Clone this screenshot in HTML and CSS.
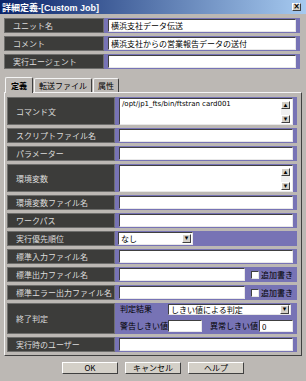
FILE: index.html
```html
<!DOCTYPE html>
<html lang="ja">
<head>
  <meta charset="UTF-8">
  <title>詳細定義-[Custom Job]</title>
  <link rel="stylesheet" href="styles.css">
</head>
<body>

  <div class="titlebar">
    <span class="title">詳細定義-[Custom Job]</span>
    <span class="close">×</span>
  </div>

  <div class="head">
    <div class="row"><div class="lbl">ユニット名</div><div class="val"><input class="fld" value="横浜支社データ伝送"></div></div>
    <div class="row"><div class="lbl">コメント</div><div class="val"><input class="fld" value="横浜支社からの営業報告データの送付"></div></div>
    <div class="row"><div class="lbl">実行エージェント</div><div class="val"><input class="fld" value=""></div></div>
  </div>

  <div class="tabs">
    <span class="tab active">定義</span>
    <span class="tab">転送ファイル</span>
    <span class="tab">属性</span>
  </div>

  <div class="panel">
    <div class="row tall">
      <div class="lbl">コマンド文</div>
      <div class="val">
        <div class="area">
          <span class="area-text">/opt/jp1_fts/bin/ftstran card001</span>
          <span class="sb"><span class="sb-btn">▴</span><span class="sb-btn">▾</span></span>
        </div>
      </div>
    </div>
    <div class="row"><div class="lbl">スクリプトファイル名</div><div class="val"><input class="fld" value=""></div></div>
    <div class="row"><div class="lbl">パラメーター</div><div class="val"><input class="fld" value=""></div></div>
    <div class="row tall">
      <div class="lbl">環境変数</div>
      <div class="val">
        <div class="area">
          <span class="area-text"></span>
          <span class="sb"><span class="sb-btn">▴</span><span class="sb-btn">▾</span></span>
        </div>
      </div>
    </div>
    <div class="row"><div class="lbl">環境変数ファイル名</div><div class="val"><input class="fld" value=""></div></div>
    <div class="row"><div class="lbl">ワークパス</div><div class="val"><input class="fld" value=""></div></div>
    <div class="row">
      <div class="lbl">実行優先順位</div>
      <div class="val pri">
        <div class="select short"><span class="select-text">なし</span><span class="drop">▾</span></div>
      </div>
    </div>
    <div class="row"><div class="lbl">標準入力ファイル名</div><div class="val"><input class="fld" value=""></div></div>
    <div class="row">
      <div class="lbl">標準出力ファイル名</div>
      <div class="val"><input class="fld narrow" value=""><span class="check"></span><span class="check-text">追加書き</span></div>
    </div>
    <div class="row">
      <div class="lbl">標準エラー出力ファイル名</div>
      <div class="val"><input class="fld narrow" value=""><span class="check"></span><span class="check-text">追加書き</span></div>
    </div>
    <div class="row judge">
      <div class="lbl">終了判定</div>
      <div class="val col">
        <div class="line top">
          <span class="cap">判定結果</span>
          <div class="select wide"><span class="select-text">しきい値による判定</span><span class="drop">▾</span></div>
        </div>
        <div class="line">
          <span class="cap">警告しきい値</span>
          <input class="fld small" value="">
          <span class="cap second">異常しきい値</span>
          <input class="fld small" value="0">
        </div>
      </div>
    </div>
    <div class="row"><div class="lbl">実行時のユーザー</div><div class="val"><input class="fld" value=""></div></div>
  </div>

  <div class="buttons">
    <button class="btn">OK</button>
    <button class="btn">キャンセル</button>
    <button class="btn">ヘルプ</button>
  </div>

</body>
</html>
```

FILE: styles.css
```css
body {
  margin: 0;
  width: 306px;
  height: 381px;
  overflow: hidden;
  background-color: #bcb8b4;
  font-family: "Noto Sans CJK JP", sans-serif;
  font-size: 8px;
  color: #000;
}

.titlebar {
  height: 14px;
  display: flex;
  align-items: center;
  justify-content: space-between;
  padding: 0 5px 0 2px;
  background: linear-gradient(to right, #0a246a, #a6caf0);
  color: white;
}

.title {
  font: bold 9px "Liberation Sans", "Noto Sans CJK JP", sans-serif;
}

.close {
  width: 9px;
  height: 8px;
  box-sizing: border-box;
  background: #d4d0c8;
  border: 1px solid;
  border-color: #fff #404040 #404040 #fff;
  color: #000;
  font: bold 8px/6px "DejaVu Sans", sans-serif;
  text-align: center;
}

/* table rows */
.head {
  display: flex;
  flex-direction: column;
  gap: 3px;
  padding: 4px 6px 0 4px;
}

.row {
  display: flex;
  height: 15px;
}

.lbl {
  box-sizing: border-box;
  flex: none;
  display: flex;
  align-items: center;
  padding-left: 8px;
  background: #3c3c3a;
  border: 1px solid #6e6e6c;
  color: #dcdcdc;
  white-space: nowrap;
}

.head .lbl {
  width: 100px;
}

.val {
  flex: 1;
  min-width: 0;
  display: flex;
  align-items: center;
  padding: 0 4px;
  background: #7773b5;
}

.fld {
  flex: 1;
  min-width: 0;
  height: 13px;
  box-sizing: border-box;
  margin: 0;
  padding: 0 2px;
  background: #fff;
  border: 1px solid;
  border-color: #404040 #e8e8e8 #e8e8e8 #404040;
  font: 8px "Noto Sans CJK JP", sans-serif;
  color: #000;
  outline: none;
}

/* tabs */
.tabs {
  display: flex;
  align-items: flex-end;
  height: 16px;
  margin-top: 7px;
  padding-left: 5px;
}

.tab {
  height: 14px;
  box-sizing: border-box;
  display: flex;
  align-items: center;
  justify-content: center;
  padding: 0 4px;
  margin-right: 1px;
  border: 1px solid;
  border-bottom: none;
  border-color: #f4f4f4 #404040 #404040 #f4f4f4;
  border-radius: 2px 2px 0 0;
}

.tab.active {
  height: 16px;
  font-weight: bold;
  margin-bottom: -1px;
  position: relative;
  background: #bcb8b4;
  padding: 0 5px;
}

.panel {
  height: 264px;
  box-sizing: border-box;
  margin: 0 4px;
  padding: 4px 4px 3px 2px;
  border: 1px solid;
  border-color: #f4f4f4 #404040 #404040 #f4f4f4;
  display: flex;
  flex-direction: column;
  gap: 3px;
}

.panel .lbl {
  width: 108px;
}

.row.tall {
  height: 28px;
}

.row.judge {
  height: 31px;
}

/* multi-line fields */
.area {
  flex: 1;
  height: 27px;
  box-sizing: border-box;
  display: flex;
  background: #fff;
  border: 1px solid;
  border-color: #404040 #e8e8e8 #e8e8e8 #404040;
}

.area-text {
  flex: 1;
  padding: 0 2px;
  font: 7px "DejaVu Sans", sans-serif;
  line-height: 10px;
}

.sb {
  width: 9px;
  margin: 2px 2px 1px 0;
  display: flex;
  flex-direction: column;
  justify-content: space-between;
  background: #f0f0f0;
}

.sb-btn, .drop {
  height: 8px;
  box-sizing: border-box;
  background: #d4d0c8;
  border: 1px solid;
  border-color: #fff #404040 #404040 #fff;
  font: 7px/6px "DejaVu Sans", sans-serif;
  text-align: center;
  color: #000;
}

/* selects */
.val.pri {
  padding-left: 3px;
}

.select {
  height: 13px;
  box-sizing: border-box;
  display: flex;
  align-items: center;
  background: #fff;
  border: 1px solid;
  border-color: #404040 #e8e8e8 #e8e8e8 #404040;
}

.select.short {
  width: 75px;
}

.select.wide {
  width: 123px;
  height: 11px;
}

.select-text {
  flex: 1;
  padding-left: 2px;
  white-space: nowrap;
}

.drop {
  width: 9px;
  height: 9px;
  margin-right: 1px;
}

/* checkbox rows */
.fld.narrow {
  flex: none;
  width: 126px;
}

.check {
  width: 8px;
  height: 8px;
  box-sizing: border-box;
  margin: 0 2px 0 6px;
  background: #fff;
  border: 1px solid;
  border-color: #404040 #e8e8e8 #e8e8e8 #404040;
}

.check-text {
  white-space: nowrap;
}

/* exit judgement */
.val.col {
  flex-direction: column;
  align-items: stretch;
  justify-content: space-between;
  padding: 1px 4px 2px 5px;
}

.line {
  display: flex;
  align-items: center;
  height: 12px;
}

.line.top {
  height: 10px;
  align-items: flex-start;
}

.cap {
  width: 48px;
  flex: none;
  white-space: nowrap;
  line-height: 10px;
}

.cap.second {
  margin-left: 8px;
  width: 49px;
}

.fld.small {
  flex: none;
  width: 34px;
  height: 12px;
}

/* buttons */
.buttons {
  display: flex;
  justify-content: center;
  gap: 7px;
  margin-top: 6px;
}

.btn {
  width: 56px;
  height: 12px;
  padding: 0;
  box-sizing: border-box;
  background: #d4d0c8;
  border: 1px solid;
  border-color: #fff #404040 #404040 #fff;
  font: 8px "Noto Sans CJK JP", sans-serif;
  line-height: 10px;
  color: #000;
}
```
